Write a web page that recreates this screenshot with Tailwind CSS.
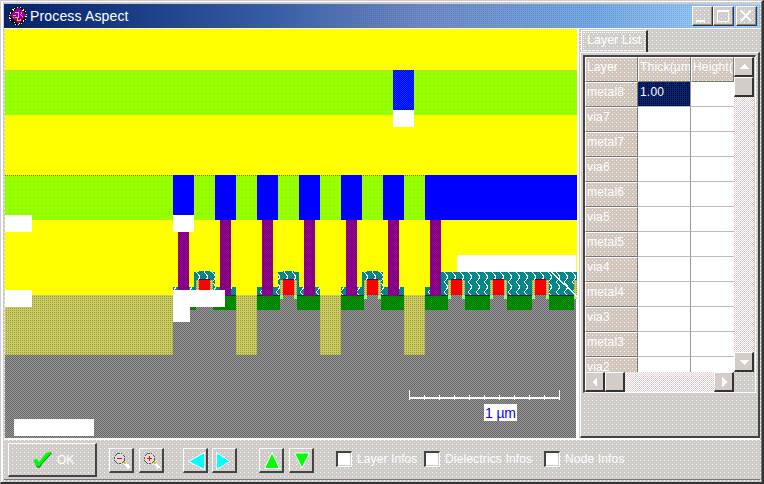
<!DOCTYPE html>
<html lang="en">
<head>
<meta charset="utf-8">
<title>Process Aspect</title>
<script src="https://cdn.jsdelivr.net/npm/@tailwindcss/browser@4"></script>
</head>
<body class="m-0 h-[484px] w-[764px] overflow-hidden font-['Liberation_Sans',sans-serif] text-[12px] text-white">
<div class="flex h-[484px] w-[764px] flex-col border-t border-r-2 border-b-2 border-l border-t-[#ccc] border-l-[#ccc] border-r-[#333] border-b-[#333] bg-[#ccc] bg-[conic-gradient(from_90deg_at_3px_3px,#ffffcc_25%,transparent_0),conic-gradient(from_90deg_at_3px_3px,#ffcccc_25%,transparent_0)] bg-[length:4px_4px] bg-[position:0_0,2px_2px]">
  <div class="flex grow flex-col border-t border-r border-b border-l-2 border-white border-r-[#777] border-b-transparent pt-[2px] pr-px pl-px">

    <!-- title bar -->
    <div class="flex h-6 shrink-0 items-center bg-[conic-gradient(from_90deg_at_1px_1px,#00669940_25%,transparent_0),linear-gradient(90deg,#08206c_0%,#0a2470_5%,#3a5ca4_35%,#7288c4_55%,#78a8e4_78%,#a6d0f8_97%)] bg-[length:2px_2px,100%_100%] pr-[3px] pl-1">
      <svg class="mr-[2px] h-5 w-5 shrink-0" viewBox="0 0 20 20" shape-rendering="crispEdges">
        <circle cx="10" cy="10" r="9" fill="#111"/>
        <circle cx="10" cy="10" r="8.500" fill="none" stroke="#ffff66" stroke-width="1" stroke-dasharray="1 2"/>
        <circle cx="10" cy="10" r="7.500" fill="none" stroke="#fff" stroke-width="1" stroke-dasharray="1 4"/>
        <path d="M10 1L18 9L11 18L2 10Z" fill="#990099"/>
        <path d="M7 6.500h4M10.500 7v5M12 8l3 3M5 9.500h3M13.500 6v2" stroke="#ff99cc" fill="none"/>
        <path d="M7 11.500h2v3h3v-2M5 11.500h1" stroke="#cccc00" fill="none"/>
      </svg>
      <div class="grow whitespace-nowrap text-[14px] leading-6 tracking-[0.15px]">Process Aspect</div>
      <div class="flex h-5">
        <div class="h-5 w-[21px] border border-t-white border-r-[#333] border-b-[#333] border-l-white bg-[#ccc] bg-[conic-gradient(from_90deg_at_3px_3px,#ffffcc_25%,transparent_0),conic-gradient(from_90deg_at_3px_3px,#ffcccc_25%,transparent_0)] bg-[length:4px_4px] bg-[position:0_0,2px_2px] shadow-[inset_-1px_-1px_0_#888]"><svg class="h-[18px] w-[19px]" viewBox="0 0 19 18"><path d="M3 14h9" stroke="#fff" stroke-width="2"/></svg></div>
        <div class="h-5 w-[21px] border border-t-white border-r-[#333] border-b-[#333] border-l-white bg-[#ccc] bg-[conic-gradient(from_90deg_at_3px_3px,#ffffcc_25%,transparent_0),conic-gradient(from_90deg_at_3px_3px,#ffcccc_25%,transparent_0)] bg-[length:4px_4px] bg-[position:0_0,2px_2px] shadow-[inset_-1px_-1px_0_#888]"><svg class="h-[18px] w-[19px]" viewBox="0 0 19 18"><path d="M3.500 4v10.500h11V4M3 4h12" stroke="#fff" fill="none"/><path d="M3 4h12" stroke="#fff" stroke-width="2"/></svg></div>
        <div class="ml-[2px] h-5 w-[21px] border border-t-white border-r-[#333] border-b-[#333] border-l-white bg-[#ccc] bg-[conic-gradient(from_90deg_at_3px_3px,#ffffcc_25%,transparent_0),conic-gradient(from_90deg_at_3px_3px,#ffcccc_25%,transparent_0)] bg-[length:4px_4px] bg-[position:0_0,2px_2px] shadow-[inset_-1px_-1px_0_#888]"><svg class="h-[18px] w-[19px]" viewBox="0 0 19 18"><path d="M4 3.500L14 14M14 3.500L4 14" stroke="#fff" stroke-width="2"/></svg></div>
      </div>
    </div>

    <!-- work area -->
    <div class="flex h-[410px] shrink-0 border-t border-white">
      <svg id="aspect" class="ml-px h-[409px] w-[574px] shrink-0 bg-white" viewBox="5 29 574 409" shape-rendering="crispEdges">
        <defs>
          <pattern id="gray" width="2" height="2" patternUnits="userSpaceOnUse"><rect width="2" height="2" fill="#999"/><rect width="1" height="1" fill="#666"/><rect x="1" y="1" width="1" height="1" fill="#666"/></pattern>
          <pattern id="lime" width="4" height="4" patternUnits="userSpaceOnUse"><rect width="4" height="4" fill="#9f0"/><rect x="1" y="1" width="1" height="1" fill="#6f0"/></pattern>
          <pattern id="khaki" width="2" height="2" patternUnits="userSpaceOnUse"><rect width="2" height="2" fill="#cc6"/><rect width="1" height="1" fill="#993"/></pattern>
          <pattern id="purple" width="2" height="2" patternUnits="userSpaceOnUse"><rect width="2" height="2" fill="#990099"/><rect width="1" height="1" fill="#770077"/><rect x="1" y="1" width="1" height="1" fill="#770077"/></pattern>
          <pattern id="diff" width="2" height="2" patternUnits="userSpaceOnUse"><rect width="2" height="2" fill="#090"/><rect width="1" height="1" fill="#070"/><rect x="1" y="1" width="1" height="1" fill="#070"/></pattern>
          <pattern id="via" width="2" height="2" patternUnits="userSpaceOnUse"><rect width="2" height="2" fill="#00f"/><rect width="1" height="1" fill="#03f"/><rect x="1" y="1" width="1" height="1" fill="#03f"/></pattern>
          <pattern id="tealbase" width="2" height="2" patternUnits="userSpaceOnUse"><rect width="2" height="2" fill="#099"/><rect width="1" height="1" fill="#077"/><rect x="1" y="1" width="1" height="1" fill="#077"/></pattern>
          <pattern id="zig" width="8" height="10" x="2" y="2" patternUnits="userSpaceOnUse"><path d="M2.500 0L6 5L2.500 10" stroke="#fff" fill="none"/></pattern>
        </defs>
        <rect x="5" y="29" width="572" height="266" fill="#ff0"/>
        <rect x="5" y="295" width="571" height="143" fill="url(#gray)"/>
        <rect x="5" y="70" width="572" height="45" fill="url(#lime)"/>
        <rect x="5" y="70" width="572" height="1" fill="#cc6"/>
        <rect x="5" y="175" width="572" height="45" fill="url(#lime)"/>
        <path d="M5 175.500H577" stroke="#996633" stroke-dasharray="1 1"/>
        <rect x="393" y="70" width="21" height="40" fill="url(#via)"/>
        <rect x="393" y="110" width="21" height="17" fill="#fff"/>
      </svg>

      <!-- layer list -->
      <div class="ml-px flex w-[181px] flex-col pt-px">
        <div class="relative z-10 ml-px h-[22px] w-[67px] border-t border-r-2 border-l border-white border-r-[#333] bg-[#ccc] bg-[conic-gradient(from_90deg_at_3px_3px,#ffffcc_25%,transparent_0),conic-gradient(from_90deg_at_3px_3px,#ffcccc_25%,transparent_0)] bg-[length:4px_4px] bg-[position:0_0,2px_2px] p-px">
          <div class="h-[19px] border border-dotted border-white pl-[3px] text-[12.5px] leading-[15px] whitespace-nowrap">Layer List</div>
        </div>
        <div class="flex grow flex-col border-t border-r-2 border-b-2 border-l border-white border-r-[#444] border-b-[#444] pt-[2px] pl-[2px]">
          <div class="h-[338px] w-[173px] border-t-2 border-r border-b border-l-2 border-[#444] border-r-white border-b-white">
            <div class="flex h-[315px]">
              <div id="grid" class="grid h-[315px] w-[149px] auto-rows-[25px] grid-cols-[53px_53px_43px] overflow-hidden bg-white text-[12px] leading-5"></div>
              <div class="flex w-[20px] flex-col bg-white bg-[conic-gradient(from_90deg_at_1px_1px,#fcc_25%,transparent_0),conic-gradient(from_90deg_at_1px_1px,#cccccc_25%,transparent_0)] bg-[length:2px_2px] bg-[position:0_0,1px_1px]">
                <div class="h-5 border border-r-2 border-b-2 border-white border-r-[#333] border-b-[#333] bg-[#d4ccc6]"><svg class="h-[17px] w-[17px]" viewBox="0 0 17 17" shape-rendering="crispEdges"><path d="M4 11h10L9 6Z" fill="#fff"/></svg></div>
                <div class="h-5 border border-r-2 border-b-2 border-white border-r-[#333] border-b-[#333] bg-[#d4ccc6]"></div>
                <div class="mt-auto h-5 border border-r-2 border-b-2 border-white border-r-[#333] border-b-[#333] bg-[#d4ccc6]"><svg class="h-[17px] w-[17px]" viewBox="0 0 17 17" shape-rendering="crispEdges"><path d="M4 7h10L9 12Z" fill="#fff"/></svg></div>
              </div>
            </div>
            <div class="flex h-5 w-[149px] bg-white bg-[conic-gradient(from_90deg_at_1px_1px,#fcc_25%,transparent_0),conic-gradient(from_90deg_at_1px_1px,#cccccc_25%,transparent_0)] bg-[length:2px_2px] bg-[position:0_0,1px_1px]">
              <div class="h-5 w-5 border border-r-2 border-b-2 border-white border-r-[#333] border-b-[#333] bg-[#d4ccc6]"><svg class="h-[17px] w-[17px]" viewBox="0 0 17 17" shape-rendering="crispEdges"><path d="M11 4v10L6 9Z" fill="#fff"/></svg></div>
              <div class="h-5 w-5 border border-r-2 border-b-2 border-white border-r-[#333] border-b-[#333] bg-[#d4ccc6]"></div>
              <div class="ml-auto h-5 w-5 border border-r-2 border-b-2 border-white border-r-[#333] border-b-[#333] bg-[#d4ccc6]"><svg class="h-[17px] w-[17px]" viewBox="0 0 17 17" shape-rendering="crispEdges"><path d="M7 4v10L12 9Z" fill="#fff"/></svg></div>
            </div>
          </div>
        </div>
      </div>
    </div>

    <!-- toolbar -->
    <div class="flex h-[42px] shrink-0 items-start border-t-2 border-b border-white border-b-[#777] pt-[3px] pl-1">
      <div class="flex h-[34px] w-[89px] items-center border border-r-2 border-b-2 border-white border-r-[#444] border-b-[#444] pl-6">
        <svg class="mr-[5px] h-[17px] w-[19px]" viewBox="0 0 19 17"><path d="M1 10L4 9L6 12L15 2L19 2L9 13L7 16.500L4 16.500Z" fill="#060"/><path d="M0 9L4 8L6 11L13 2L18 0.500L18 2L9 12L6.500 15.500L4 15.500Z" fill="#0f0"/></svg>
        <span class="text-[12px]">OK</span>
      </div>
      <div class="mt-[5px] ml-3 h-[25px] w-[25px] border border-r-2 border-b-2 border-white border-r-[#444] border-b-[#444]">
        <svg class="h-[22px] w-[22px]" viewBox="0 0 22 22" shape-rendering="crispEdges"><path d="M14 13l5 6" stroke="#fff" stroke-width="3"/><path d="M14 13l2 2" stroke="#cc0" stroke-width="2"/><circle cx="9.500" cy="9.500" r="5" fill="#ddd" stroke="#555" stroke-dasharray="2 1"/><path d="M7 9.500h5" stroke="#f00"/></svg>
      </div>
      <div class="mt-[5px] ml-[5px] h-[25px] w-[25px] border border-r-2 border-b-2 border-white border-r-[#444] border-b-[#444]">
        <svg class="h-[22px] w-[22px]" viewBox="0 0 22 22" shape-rendering="crispEdges"><path d="M14 13l5 6" stroke="#fff" stroke-width="3"/><path d="M14 13l2 2" stroke="#cc0" stroke-width="2"/><circle cx="9.500" cy="9.500" r="5" fill="#ddd" stroke="#555" stroke-dasharray="2 1"/><path d="M7 9.500h5M9.500 7v5" stroke="#f00"/></svg>
      </div>
      <div class="mt-[5px] ml-[19px] h-[25px] w-[25px] border border-r-2 border-b-2 border-white border-r-[#444] border-b-[#444]">
        <svg class="h-[22px] w-[22px]" viewBox="0 0 22 22"><path d="M20.500 3.500v17L4.500 12.500Z" fill="#0ff" stroke="#fff"/></svg>
      </div>
      <div class="mt-[5px] ml-1 h-[25px] w-[25px] border border-r-2 border-b-2 border-white border-r-[#444] border-b-[#444]">
        <svg class="h-[22px] w-[22px]" viewBox="0 0 22 22"><path d="M3.500 3.500v17L17 12.500Z" fill="#0ff" stroke="#fff"/></svg>
      </div>
      <div class="mt-[5px] ml-[22px] h-[25px] w-[25px] border border-r-2 border-b-2 border-white border-r-[#444] border-b-[#444]">
        <svg class="h-[22px] w-[22px]" viewBox="0 0 22 22"><path d="M4.500 19.500h15L12 3.500Z" fill="#0f0" stroke="#fff"/></svg>
      </div>
      <div class="mt-[5px] ml-[5px] h-[25px] w-[25px] border border-r-2 border-b-2 border-white border-r-[#444] border-b-[#444]">
        <svg class="h-[22px] w-[22px]" viewBox="0 0 22 22"><path d="M4.500 4h15L12 19Z" fill="#0f0" stroke="#fff"/></svg>
      </div>
      <div class="mt-2 ml-[22px] h-4 w-4 border-t-2 border-r border-b border-l-2 border-[#444] border-r-white border-b-white bg-white shadow-[inset_-1px_-1px_0_#ccc]"></div>
      <div class="mt-2 ml-[5px] w-[67px] text-[12px] leading-4 tracking-[0.1px] whitespace-nowrap">Layer Infos</div>
      <div class="mt-2 h-4 w-4 border-t-2 border-r border-b border-l-2 border-[#444] border-r-white border-b-white bg-white shadow-[inset_-1px_-1px_0_#ccc]"></div>
      <div class="mt-2 ml-[5px] w-[99px] text-[12px] leading-4 tracking-[0.15px] whitespace-nowrap">Dielectrics Infos</div>
      <div class="mt-2 h-4 w-4 border-t-2 border-r border-b border-l-2 border-[#444] border-r-white border-b-white bg-white shadow-[inset_-1px_-1px_0_#ccc]"></div>
      <div class="mt-2 ml-[5px] text-[12px] leading-4 tracking-[0.15px] whitespace-nowrap">Node Infos</div>
    </div>
  </div>
</div>

<script>
// Grid cells: a fixed header row and column, then the value cells.
const fixedCell = "overflow-hidden whitespace-nowrap border border-white border-r-[#777] border-b-[#777] bg-[#d0c6c0] bg-[conic-gradient(from_90deg_at_3px_3px,#ffffcc_25%,transparent_0),conic-gradient(from_90deg_at_3px_3px,#ffcccc_25%,transparent_0)] bg-[length:4px_4px] bg-[position:0_0,2px_2px] bg-origin-border pl-px leading-[19px] tracking-[0.2px]";
const valueCell = "border-r border-b border-r-[#999] border-b-[#bbb] pl-[3px]";
const selectedCell = "bg-[#0a246a] bg-[conic-gradient(from_90deg_at_1px_1px,#003_25%,transparent_0)] bg-[length:2px_2px] border-b border-r border-r-[#999] border-b-[#bbb] pl-[2px] text-white tracking-[0.2px]";
const lastCell = "border-b border-[#bbb]";
const grid = document.getElementById("grid");
const cell = (cls, text) => { const d = document.createElement("div"); d.className = cls; d.textContent = text; grid.append(d); };
["Layer", "Thick(µm)", "Height(µm)"].forEach(t => cell(fixedCell, t));
["metal8", "via7", "metal7", "via6", "metal6", "via5", "metal5", "via4", "metal4", "via3", "metal3", "via2"].forEach((n, i) => {
  cell(fixedCell, n);
  cell(i === 0 ? selectedCell : valueCell, i === 0 ? "1.00" : "");
  cell(lastCell, "");
});

// Cross-section of the transistors and interconnect.
let s = "";
const r = (x1, y1, x2, y2, f) => { s += `<rect x="${x1}" y="${y1}" width="${x2 - x1}" height="${y2 - y1}" fill="${f}"/>`; };
const teal = (x1, y1, x2, y2) => { r(x1, y1, x2, y2, "url(#tealbase)"); r(x1, y1, x2, y2, "url(#zig)"); };
[[5, 173], [236, 257], [320, 341], [404, 425]].forEach(([a, b]) => r(a, 295, b, 355, "url(#khaki)"));
[[173, 196], [213, 236], [257, 280], [297, 320], [341, 364], [381, 404], [425, 448], [465, 490], [507, 532], [549, 574]].forEach(([a, b]) => { r(a, 295, b, 310, "url(#diff)"); r(a, 295, b, 296, "#606"); });
[173, 257, 341].forEach(a => { teal(a, 287, a + 63, 295); teal(a + 21, 272, a + 42, 288); teal(a + 26, 271, a + 37, 273); });
teal(425, 287, 441, 295);
teal(441, 272, 577, 295);
[199, 283, 367, 451, 493, 535].forEach(x => {
  r(x - 3, 280, x, 295, "url(#khaki)"); r(x + 11, 280, x + 14, 295, "url(#khaki)");
  r(x - 3, 295, x, 299, "#8f8"); r(x + 11, 295, x + 14, 299, "#8f8");
  r(x, 280, x + 11, 295, "#f00"); r(x, 279, x + 11, 280, "#606");
});
r(574, 280, 577, 295, "url(#khaki)"); r(574, 295, 577, 299, "#8f8");
[173, 215, 257, 299, 341, 383].forEach(x => r(x, 175, x + 21, 220, "#00f"));
r(425, 175, 577, 220, "#00f");
[178, 220, 262, 304, 346, 388, 430].forEach(x => r(x, 220, x + 11, 296, "url(#purple)"));
[[5, 215, 32, 232], [5, 290, 32, 307], [173, 215, 194, 232], [173, 290, 225, 307], [173, 307, 190, 322], [457, 255, 576, 272], [14, 419, 94, 436], [484, 404, 517, 421]].forEach(b => r(...b, "#fff"));
s += '<path d="M551 272L577 296" stroke="#fff" stroke-width="1.500"/>';
r(409, 397, 560, 399, "#fff");
for (let i = 0; i <= 10; i++) { const e = i % 10 === 0; r(409 + i * 15, e ? 390 : 395, 410 + i * 15, 400, "#fff"); }
s += `<text x="485" y="418" font-size="14" fill="#00f" textLength="31">1 µm</text>`;
document.getElementById("aspect").insertAdjacentHTML("beforeend", s);
</script>
</body>
</html>
